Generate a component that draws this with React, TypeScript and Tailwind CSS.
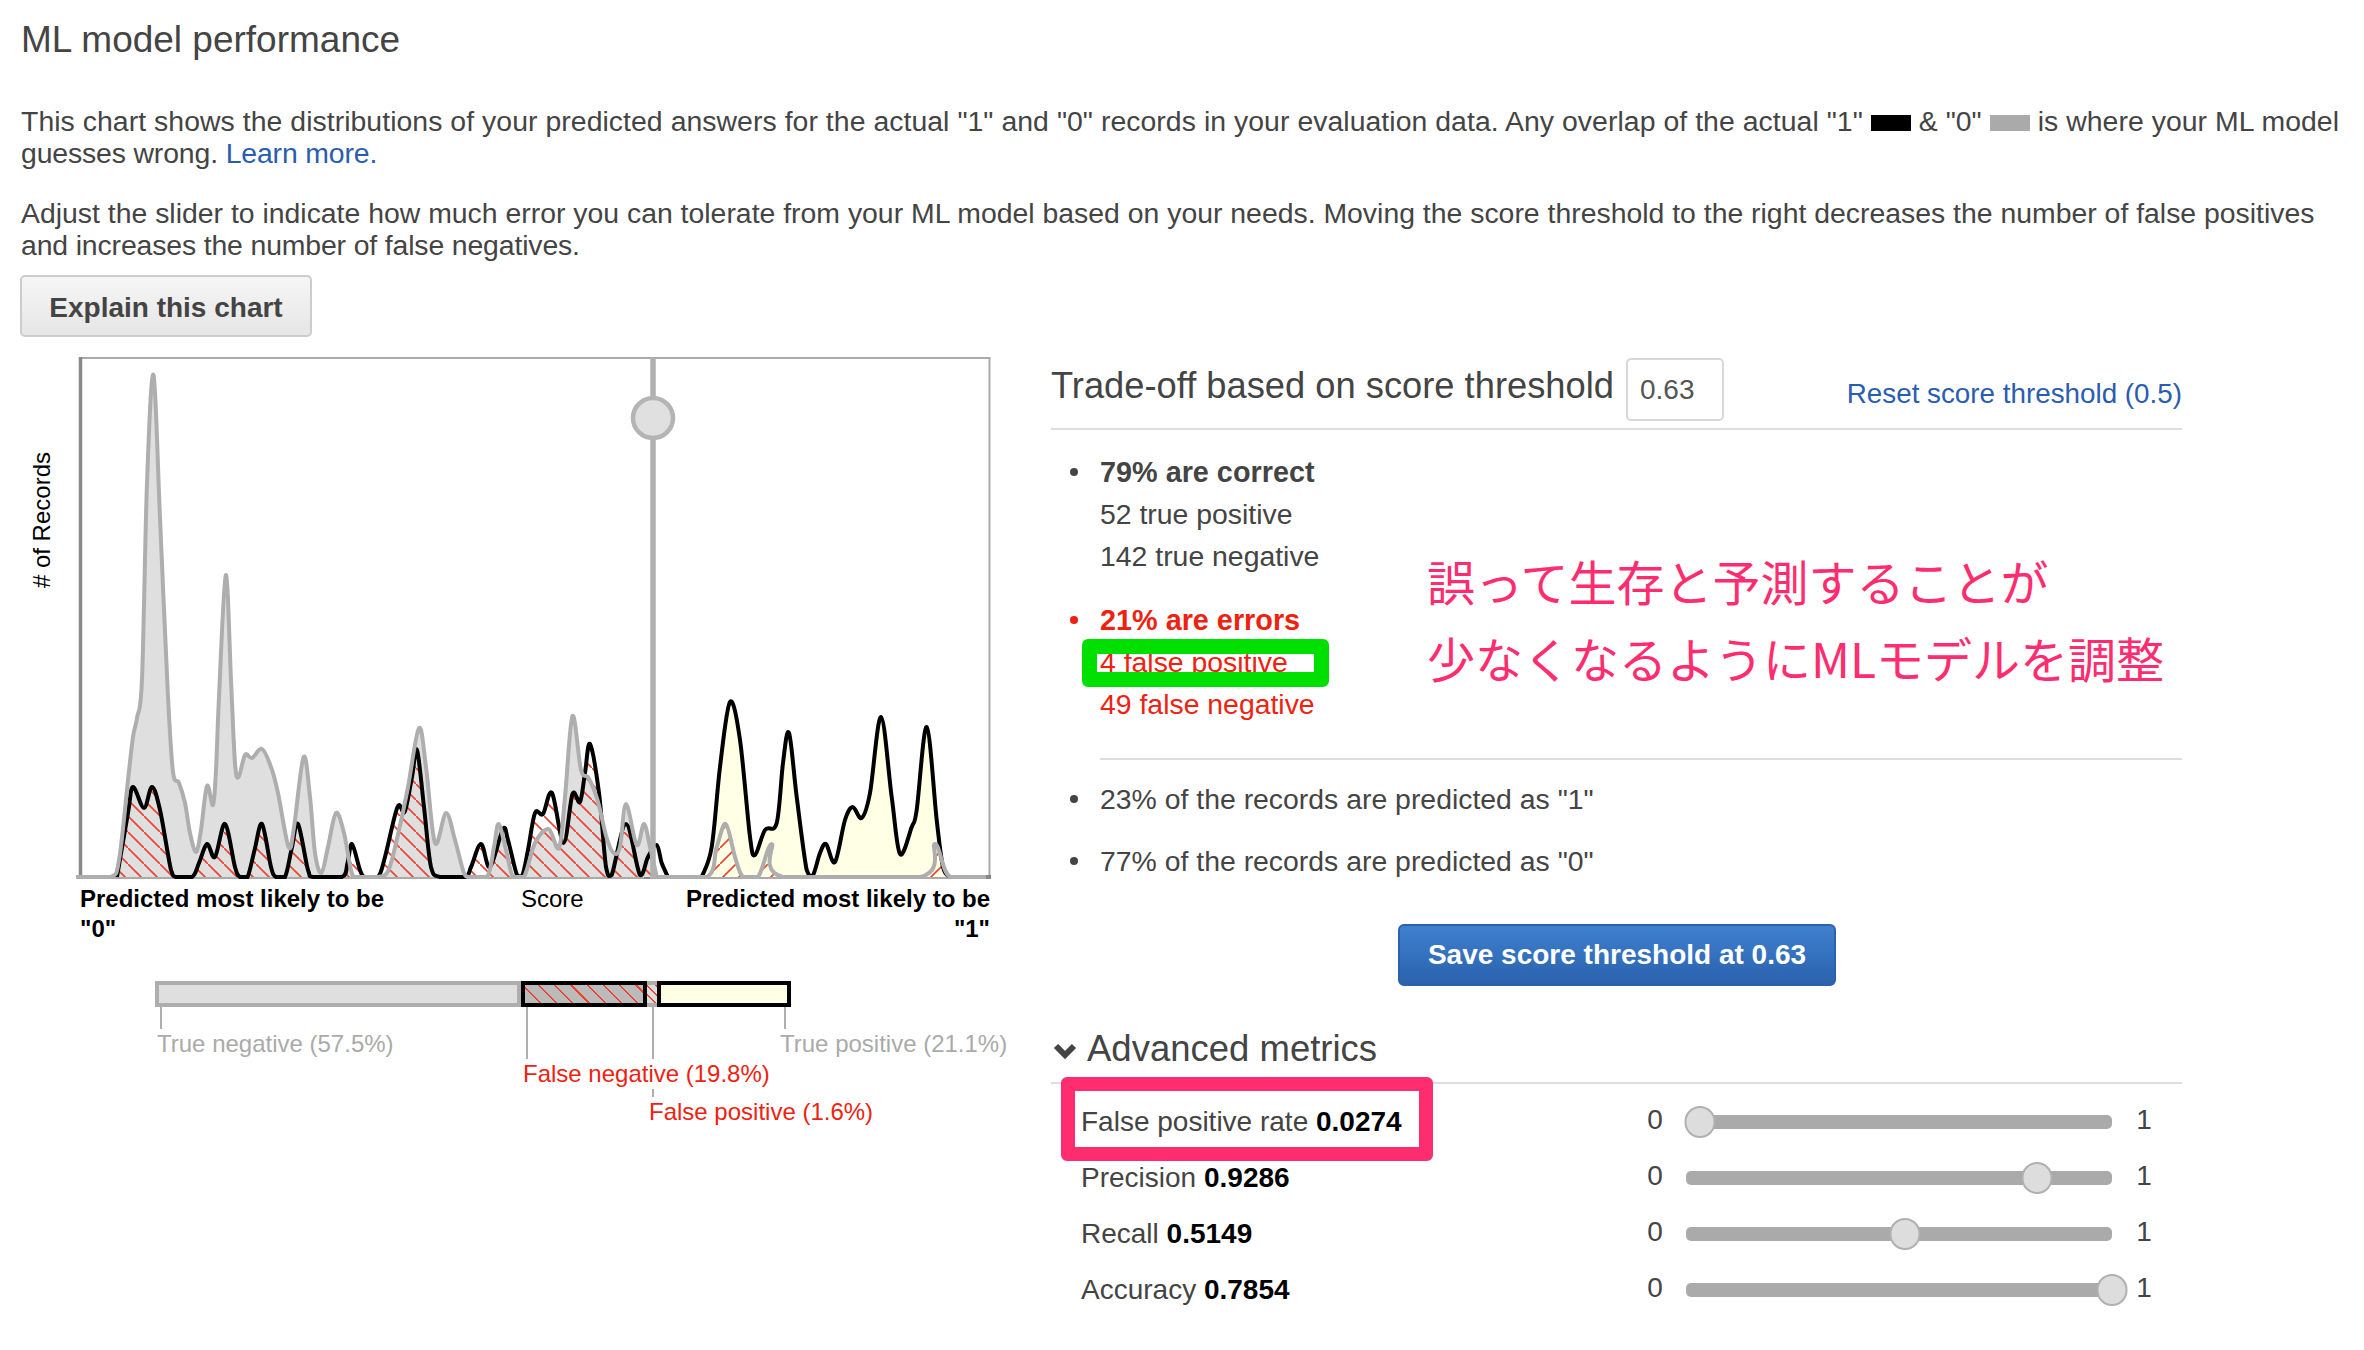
type Pt = [number, number];

const BASE = 877;

const greyLeft: Pt[] = [
  [76, 877], [110, 877], [119, 860], [128, 780], [133, 737], [137, 718], [142, 679], [147, 483], [153.5, 375], [160, 518],
  [168, 697], [173, 772], [179, 783], [185, 803], [190, 833], [196, 852], [201, 830], [207, 786], [213, 805], [216, 770],
  [219, 697], [225.8, 575], [231, 680], [235, 763], [238.6, 777], [245, 755], [252, 758], [262, 749], [271, 767], [278, 793],
  [288.6, 847], [294, 827], [303.6, 757], [310, 797], [315, 853], [321.4, 873], [328, 847], [336, 813], [344, 833], [351, 870],
  [356, 877], [378, 877], [388.6, 870], [399, 830], [408, 787], [419, 728], [426, 767], [435, 843], [446, 813], [455, 840],
  [463.6, 872], [469, 877], [487, 877], [494, 847], [498.6, 824], [506, 850], [513, 877], [524, 877], [535, 843], [548.6, 829],
  [559, 848], [565, 797], [572.5, 716], [581, 770], [588.6, 778], [597.5, 800], [606.4, 837], [613.6, 853], [620, 847], [626, 804],
  [636.7, 845], [644, 824], [650, 847], [656.7, 877],
];

const greyRight: Pt[] = [
  [656.7, 877], [706.7, 877], [716.7, 847], [725.7, 824], [735, 857], [743, 877], [758, 877], [771.7, 844], [783, 877],
  [920, 877], [935, 844], [950, 877], [986, 877],
];

const blackLeft: Pt[] = [
  [105, 877], [117, 877], [128, 813], [133, 787], [144, 808], [152, 787], [160, 810], [171, 870], [176, 877], [192, 877], [199, 863],
  [207, 844], [215, 857], [225, 824], [235, 867], [240, 877], [247.5, 877], [254.6, 850], [262, 824], [271, 867], [276, 877],
  [285, 877], [292, 847], [298, 824], [308, 870], [313.6, 877], [342, 877], [347.5, 863], [352, 844], [360, 870], [365, 877],
  [378, 877], [385, 857], [397.5, 807], [404.6, 812], [412, 777], [417, 750], [424, 807], [431, 867], [440, 877], [465, 877],
  [471, 867], [481, 844], [490, 867], [503, 829], [508, 840], [517, 875], [522.5, 875], [528, 850], [535, 813], [543, 814],
  [552, 793], [563.6, 843], [572.5, 794], [580, 802], [585, 773], [590, 744], [599, 793], [606, 867], [611.7, 875], [626, 824],
  [640, 875], [648, 857], [656.7, 845], [661.7, 863], [668, 877],
];

const blackRight: Pt[] = [
  [701.7, 877], [711.7, 847], [720, 767], [730, 702], [740, 740], [750, 837], [755, 855], [765, 830], [776.7, 823], [783, 763],
  [789, 733], [796.7, 797], [806.7, 870], [813, 875], [820, 853], [826, 844], [835, 862], [845, 820], [852.7, 807], [861.7, 818],
  [870, 793], [881, 717], [891.7, 797], [900, 854], [911.7, 827], [916.7, 810], [926.7, 727], [936.7, 820], [943, 867], [950, 877],
];

// catmull-rom through the points, kept above the baseline
const smooth = (pts: Pt[]) => {
  let d = `M${pts[0][0]},${pts[0][1]}`;
  for (let i = 0; i < pts.length - 1; i++) {
    const p0 = pts[Math.max(i - 1, 0)];
    const p1 = pts[i];
    const p2 = pts[i + 1];
    const p3 = pts[Math.min(i + 2, pts.length - 1)];
    const c1x = p1[0] + (p2[0] - p0[0]) / 6;
    const c1y = Math.min(p1[1] + (p2[1] - p0[1]) / 6, BASE);
    const c2x = p2[0] - (p3[0] - p1[0]) / 6;
    const c2y = Math.min(p2[1] - (p3[1] - p1[1]) / 6, BASE);
    d += `C${c1x.toFixed(1)},${c1y.toFixed(1)} ${c2x.toFixed(1)},${c2y.toFixed(1)} ${p2[0]},${p2[1]}`;
  }
  return d;
};

const closed = (pts: Pt[]) => `${smooth(pts)}Z`;

const Chart = () => (
  <svg width="920" height="526" viewBox="76 355 920 526" className="block shrink-0">
    <defs>
      <pattern id="hatchLeft" width="16" height="16" patternUnits="userSpaceOnUse">
        <path d="M-4,-4L20,20" stroke="#ee4433" strokeWidth="1.7" />
      </pattern>
      <pattern id="hatchRight" width="16" height="16" patternUnits="userSpaceOnUse">
        <path d="M-4,20L20,-4" stroke="#ee4433" strokeWidth="1.7" />
      </pattern>
      <clipPath id="leftSide">
        <rect x="76" y="355" width="577" height="526" />
      </clipPath>
      <clipPath id="rightSide">
        <rect x="653" y="355" width="340" height="526" />
      </clipPath>
    </defs>

    <path d="M80,358H989.5V877" fill="none" stroke="#aaaaaa" strokeWidth="2" />
    <path d="M80.5,357V879" fill="none" stroke="#888888" strokeWidth="3.5" />
    <path d="M78,877H991" fill="none" stroke="#aaaaaa" strokeWidth="4" />
    <path d="M980,877H991M644,877H650" fill="none" stroke="#888888" strokeWidth="4" />

    <path d={closed(greyLeft)} fill="#dfdfdf" clipPath="url(#leftSide)" />
    <path d={closed(blackLeft)} fill="url(#hatchLeft)" clipPath="url(#leftSide)" />
    <path d={closed(blackRight)} fill="#ffffe6" />
    <path d={closed(greyRight)} fill="url(#hatchRight)" clipPath="url(#rightSide)" />

    <path d={smooth(blackLeft.slice(1))} fill="none" stroke="#000000" strokeWidth="4" />
    <path d={smooth(blackRight)} fill="none" stroke="#000000" strokeWidth="4" />
    <path d={smooth(greyLeft)} fill="none" stroke="#aeaeae" strokeWidth="4" />
    <path d={smooth(greyRight)} fill="none" stroke="#aeaeae" strokeWidth="4" />

    <path d="M653,358V878" stroke="#b0b0b0" strokeWidth="5.5" />
    <circle cx="653" cy="418" r="20" fill="#e0e0e0" stroke="#b4b4b4" strokeWidth="4.5" />
  </svg>
);

const StackedBar = () => (
  <div className="relative mt-[38px] h-[200px] text-[24px] leading-[30px]">
    <div className="ml-[135px] flex h-[26px] w-[636px]">
      <div className="w-[366px] border-4 border-[#aeaeae] bg-[#dfdfdf]" />
      <div className="w-[126px] border-4 border-black bg-[repeating-linear-gradient(45deg,#bbbbbb_0,#bbbbbb_10px,#ee4433_10px,#ee4433_11.5px)]" />
      <div className="w-[10px] border-y-4 border-[#aeaeae] bg-[repeating-linear-gradient(45deg,#dddddd_0,#dddddd_5px,#ee4433_5px,#ee4433_6.5px)]" />
      <div className="w-[134px] border-4 border-black bg-[#ffffe6]" />
    </div>

    <div className="absolute left-[140px] top-[26px] h-[24px] w-[1.5px] bg-[#aeaeae]" />
    <div className="absolute left-[506px] top-[26px] h-[54px] w-[1.5px] bg-[#aeaeae]" />
    <div className="absolute left-[632px] top-[26px] h-[115px] w-[1.5px] bg-[#aeaeae]" />
    <div className="absolute left-[764px] top-[26px] h-[24px] w-[1.5px] bg-[#aeaeae]" />

    <span className="absolute left-[137px] top-[48px] bg-white text-[#aaaaaa]">True negative (57.5%)</span>
    <span className="absolute left-[760px] top-[48px] whitespace-nowrap bg-white text-[#aaaaaa]">True positive (21.1%)</span>
    <span className="absolute left-[503px] top-[78px] whitespace-nowrap bg-white text-[#ee2211]">False negative (19.8%)</span>
    <span className="absolute left-[629px] top-[116px] whitespace-nowrap bg-white text-[#ee2211]">False positive (1.6%)</span>
  </div>
);

const Slider = ({ label, value, pos }: { label: string; value: string; pos: number }) => (
  <div className="flex h-[56px] items-center">
    <div className="w-[565px]">
      {label} <b className="text-black">{value}</b>
    </div>
    <span className="w-[18px] -translate-y-[2px] text-center">0</span>
    <div className="relative ml-[22px] h-[14px] w-[426px] rounded-[5px] bg-[#aaaaaa]">
      <div
        className="absolute top-[-9px] h-[32px] w-[31px] -translate-x-1/2 rounded-full border-2 border-[#b0b0b0] bg-[#dddddd]"
        style={{ left: `${pos}%` }}
      />
    </div>
    <span className="ml-[24px] w-[16px] -translate-y-[2px] text-center">1</span>
  </div>
);

const bullet =
  "relative before:absolute before:left-[-30px] before:top-[17px] before:size-[8px] before:rounded-full before:bg-current";

const App = () => {
  return (
    <div className="relative h-[1350px] w-[2364px] overflow-hidden bg-white pl-[20px] font-['Liberation_Sans',Arial,sans-serif] text-[28px] leading-[31.5px] text-[#444444]">
      <h1 className="ml-[1px] pt-[20px] text-[37px] leading-[40px]">ML model performance</h1>

      <p className="ml-[1px] mt-[46px] whitespace-nowrap text-[28.4px]">
        <span className="tracking-[0.05px]">
          This chart shows the distributions of your predicted answers for the actual "1" and "0" records in your evaluation data. Any overlap of the actual "1"{" "}
          <span className="inline-block h-[16px] w-[40px] bg-black" /> & "0"{" "}
          <span className="inline-block h-[16px] w-[40px] bg-[#aaaaaa]" /> is where your ML model
        </span>
        <br />
        <span className="tracking-[-0.14px]">
          guesses wrong. <a className="text-[#2a5db0]">Learn more.</a>
        </span>
      </p>
      <p className="ml-[1px] mt-[29px] whitespace-nowrap text-[28.4px]">
        Adjust the slider to indicate how much error you can tolerate from your ML model based on your needs. Moving the score threshold to the right decreases the number of false positives
        <br />
        <span className="tracking-[-0.14px]">and increases the number of false negatives.</span>
      </p>

      <button className="mt-[14px] block h-[62px] w-[292px] rounded-[5px] border-2 border-[#cccccc] bg-linear-to-b from-[#f6f6f6] to-[#e6e6e6] pt-[3px] font-bold">
        Explain this chart
      </button>

      <div className="mt-[18px] flex">
        {/* left: chart */}
        <div className="w-[1031px] shrink-0">
          <div className="flex">
            <div className="flex h-[330px] w-[56px] items-center justify-center pr-[12px]">
              <span className="rotate-180 whitespace-nowrap text-[24px] leading-[28px] text-black [writing-mode:vertical-rl]">
                # of Records
              </span>
            </div>
            <Chart />
          </div>

          <div className="ml-[60px] mt-[3px] flex w-[910px] whitespace-nowrap text-[24px] leading-[29.5px] text-black">
            <div className="w-[441px] font-bold">
              Predicted most likely to be
              <br />
              "0"
            </div>
            <div className="w-[165px]">Score</div>
            <div className="flex-1 text-right font-bold">
              Predicted most likely to be
              <br />
              "1"
            </div>
          </div>

          <StackedBar />
        </div>

        {/* right: trade-off panel */}
        <div className="relative w-[1131px]">
          <div className="flex h-[75px] items-start border-b-2 border-[#dddddd]">
            <h2 className="whitespace-nowrap text-[36.3px] leading-[62px]">Trade-off based on score threshold</h2>
            <div className="ml-[12px] mt-[3px] flex h-[63px] w-[98px] items-center rounded-[5px] border-2 border-[#d8d8d8] pl-[12px] text-[#555555]">
              0.63
            </div>
            <a className="ml-auto mt-[23px] whitespace-nowrap text-[27.8px] leading-[32px] text-[#2a5db0]">Reset score threshold (0.5)</a>
          </div>

          <ul className="ml-[49px] mt-[21px] text-[28.4px] leading-[42px]">
            <li className={`${bullet} text-[28.8px] font-bold`}>79% are correct</li>
            <li>52 true positive</li>
            <li>142 true negative</li>
            <li className={`${bullet} mt-[22px] text-[28.8px] font-bold text-[#ee2211]`}>21% are errors</li>
            <li className="text-[#ee2211]">4 false positive</li>
            <li className="text-[#ee2211]">49 false negative</li>
          </ul>

          <div className="absolute left-[31px] top-[284px] h-[48px] w-[247px] rounded-[6px] border-[15px] border-[#00e000]" />

          <div className="absolute left-[376px] top-[187px] whitespace-nowrap font-['Noto_Sans_CJK_JP',sans-serif] text-[48px] leading-[77px] text-[#ff2d6f]">
            誤って生存と予測することが
            <br />
            少なくなるようにMLモデルを調整
          </div>

          <div className="ml-[49px] mt-[33px] h-[2px] bg-[#dddddd]" />

          <ul className="ml-[49px] mt-[18px] text-[28.4px] leading-[42px]">
            <li className={bullet}>23% of the records are predicted as "1"</li>
            <li className={`${bullet} mt-[20px]`}>77% of the records are predicted as "0"</li>
          </ul>

          <button className="ml-[347px] mt-[42px] block h-[62px] w-[438px] rounded-[6px] border-2 border-[#2a62ad] bg-linear-to-b from-[#3f80cf] to-[#2a62ad] font-bold text-white">
            Save score threshold at 0.63
          </button>

          <div className="mt-[38px] flex items-center border-b-2 border-[#dddddd] pb-[8px] text-[36.5px] leading-[50px]">
            <svg width="24" height="17" viewBox="0 0 24 17" className="ml-[2px] mr-[10px] mt-[4px]">
              <path d="M3,3L12,12L21,3" fill="none" stroke="#444444" strokeWidth="6" />
            </svg>
            Advanced metrics
          </div>

          <div className="mt-[10px] pl-[30px]">
            <Slider label="False positive rate" value="0.0274" pos={3.2} />
            <Slider label="Precision" value="0.9286" pos={82.3} />
            <Slider label="Recall" value="0.5149" pos={51.3} />
            <Slider label="Accuracy" value="0.7854" pos={100} />
          </div>

          <div className="absolute left-[10px] top-[722px] h-[84px] w-[372px] rounded-[6px] border-[14px] border-[#ff2d6f]" />
        </div>
      </div>
    </div>
  );
};

export default App;
